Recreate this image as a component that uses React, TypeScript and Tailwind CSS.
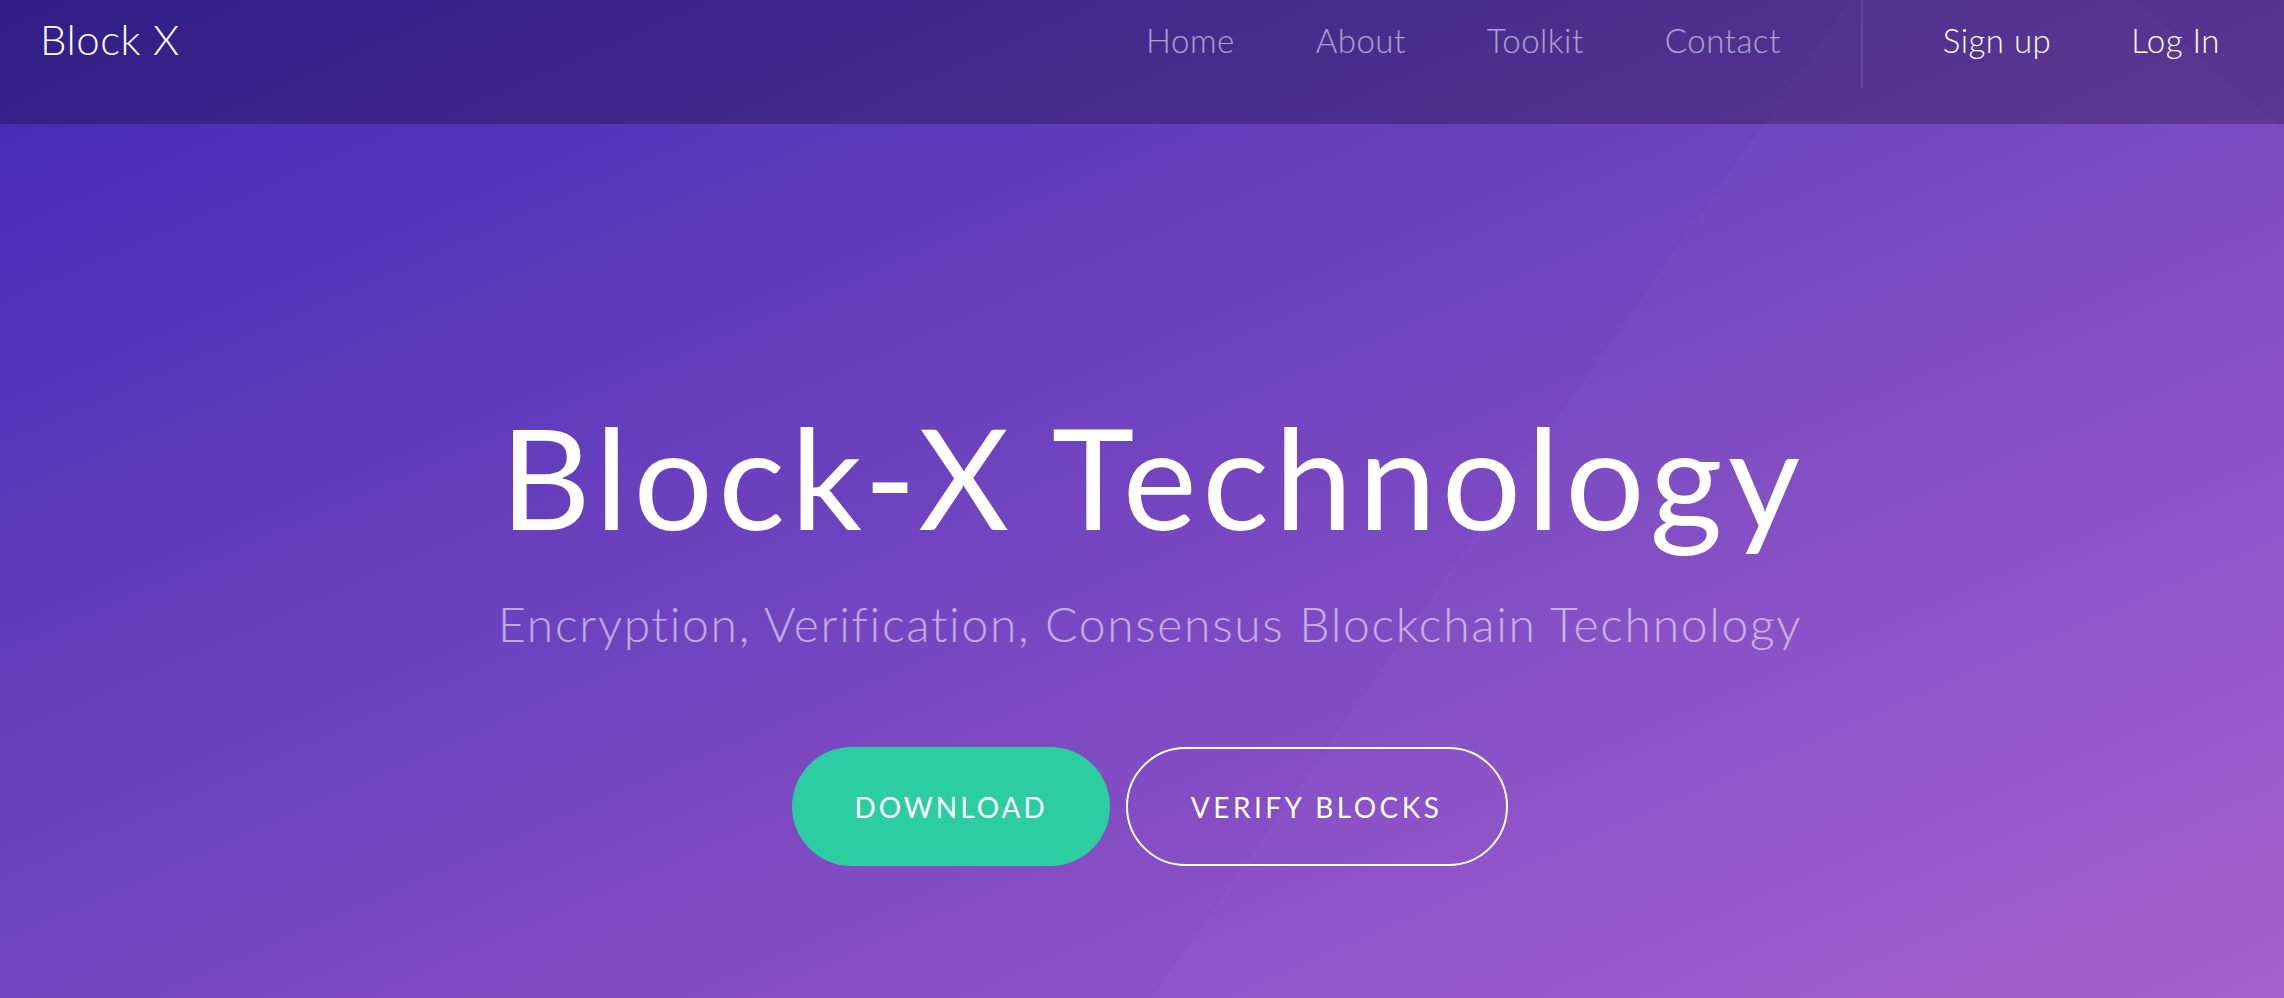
const navLinks = ["Home", "About", "Toolkit", "Contact"];

const App = () => {
  return (
    <div className="relative min-h-[998px] overflow-hidden bg-linear-to-br from-[#4128b5] via-[#7445c0] to-[#a65dcd] font-['Lato','Open_Sans',sans-serif] text-white">
      {/* faint rotated square behind everything */}
      <div className="pointer-events-none absolute inset-0 bg-white/[0.02] [clip-path:polygon(1850px_0,2137px_0,2284px_131px,2284px_998px,1151px_998px)]"></div>

      <nav className="relative flex h-[124px] items-start justify-between bg-black/25 pl-[40px] pr-[64px]">
        <a href="#" className="mt-[18px] text-[42px] font-light leading-none tracking-[0.5px]">
          Block X
        </a>
        <div className="flex items-start">
          <ul className="flex gap-[81px] pt-[24px]">
            {navLinks.map((link) => (
              <li key={link}>
                <a href="#" className="text-[33px] font-light leading-none tracking-[0.5px] text-white/55">
                  {link}
                </a>
              </li>
            ))}
          </ul>
          <div className="mx-[80px] h-[88px] w-[2px] bg-white/10"></div>
          <div className="flex gap-[80px] pt-[24px]">
            <a href="#" className="text-[33px] font-light leading-none tracking-[0.5px]">
              Sign up
            </a>
            <a href="#" className="text-[33px] font-light leading-none tracking-[0.5px]">
              Log In
            </a>
          </div>
        </div>
      </nav>

      <section className="relative flex flex-col items-center pl-[16px] pt-[282px] text-center">
        <h1 className="pl-[6px] text-[140px] leading-none tracking-[5.5px]">
          Block-X Technology
        </h1>
        <p className="mt-[54px] text-[48px] font-light leading-none tracking-[1.7px] text-white/55">
          Encryption, Verification, Consensus Blockchain Technology
        </p>
        <div className="mt-[99px] flex gap-4">
          <button className="flex h-[119px] items-center rounded-full bg-[#2ccda0] px-[62px] text-[28px] uppercase tracking-[3px]">
            Download
          </button>
          <button className="flex h-[119px] items-center rounded-full border-2 border-white px-[63px] text-[28px] uppercase tracking-[3.5px]">
            Verify Blocks
          </button>
        </div>
      </section>
    </div>
  );
};

export default App;
